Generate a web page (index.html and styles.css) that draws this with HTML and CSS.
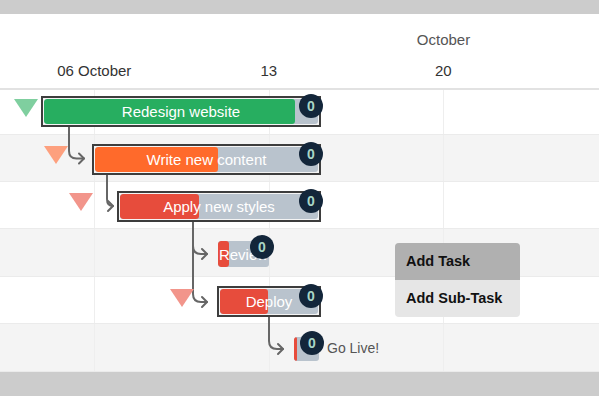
FILE: index.html
```html
<!DOCTYPE html>
<html lang="en">
<head>
    <meta charset="UTF-8">
    <title>Gantt</title>
    <link rel="stylesheet" href="styles.css">
</head>
<body>
    <div class="topbar"></div>

    <!-- Timescale -->
    <header class="scale">
        <div class="months"><span class="month">October</span></div>
        <div class="weeks">
            <span>06 October</span>
            <span>13</span>
            <span>20</span>
        </div>
    </header>

    <main class="chart">
        <div class="row first"></div>
        <div class="row"></div>
        <div class="row"></div>
        <div class="row tall"></div>
        <div class="row"></div>
        <div class="row tall"></div>

        <!-- dependency links -->
        <svg class="links" width="599" height="282" viewBox="0 0 599 282">
            <g fill="none" stroke="#666" stroke-width="2" stroke-linecap="round" stroke-linejoin="round">
                <path d="M69 36 V61 Q69 68.5 76.5 68.5 H84"/>
                <path d="M79 63.5 L84 68.5 L79 73.5"/>
                <path d="M107 84 V109 Q107 116 113 116"/>
                <path d="M108 111 L113 116 L108 121"/>
                <path d="M193 131 V204 Q193 212 201 212 H207"/>
                <path d="M193 156 Q193 164 201 164 H207"/>
                <path d="M202 159 L207 164 L202 169"/>
                <path d="M202 207 L207 212 L202 217"/>
                <path d="M269 227 V251 Q269 259 277 259 H283"/>
                <path d="M278 254 L283 259 L278 264"/>
            </g>
        </svg>

        <span class="toggle green" style="left:14px;top:9px"></span>
        <span class="toggle orange" style="left:44px;top:56px"></span>
        <span class="toggle red" style="left:69px;top:103px"></span>
        <span class="toggle red" style="left:170px;top:199px"></span>

        <div class="bar parent" style="left:41px;top:6px;width:280px">
            <div class="track"><div class="progress green" style="width:251px"></div><span class="label">Redesign website</span></div>
            <span class="badge">0</span>
        </div>
        <div class="bar parent" style="left:92px;top:54px;width:229px">
            <div class="track"><div class="progress orange" style="width:123px"></div><span class="label">Write new content</span></div>
            <span class="badge">0</span>
        </div>
        <div class="bar parent" style="left:117px;top:101px;width:204px">
            <div class="track"><div class="progress red" style="width:79px"></div><span class="label">Apply new styles</span></div>
            <span class="badge">0</span>
        </div>
        <div class="bar" style="left:218px;top:151px;width:51px">
            <div class="track"><div class="progress red" style="width:11px"></div><span class="label">Review</span></div>
            <span class="badge">0</span>
        </div>
        <div class="bar parent" style="left:217px;top:196px;width:104px">
            <div class="track"><div class="progress red" style="width:48px"></div><span class="label">Deploy</span></div>
            <span class="badge">0</span>
        </div>
        <div class="bar small" style="left:294px;top:247px;width:25px">
            <div class="track"><div class="progress red" style="width:3px"></div></div>
            <span class="badge">0</span>
            <span class="outside">Go Live!</span>
        </div>

        <!-- context menu -->
        <ul class="menu">
            <li class="active">Add Task</li>
            <li>Add Sub-Task</li>
        </ul>
    </main>

    <div class="bottombar"></div>
</body>
</html>
```

FILE: styles.css
```css
body {
    margin: 0;
    padding: 0;
    width: 599px;
    height: 396px;
    overflow: hidden;
    font-family: "Liberation Sans", Arial, sans-serif;
    background-color: #fff;
}

.topbar {
    height: 14px;
    background-color: #cccccc;
}

.bottombar {
    height: 24px;
    background-color: #cccccc;
}

/* timescale header */
.scale {
    height: 74px;
    border-bottom: 2px solid #e2e2e2;
    font-size: 15px;
}

.months {
    display: flex;
    padding-left: 356px;
    padding-top: 17px;
    height: 31px;
}

.month {
    width: 175px;
    text-align: center;
    color: #555;
}

.weeks {
    display: flex;
    padding-left: 7px;
}

.weeks span {
    width: 174.5px;
    text-align: center;
    color: #333;
}

/* rows */
.chart {
    position: relative;
    height: 282px;
}

.row {
    height: 47px;
    box-sizing: border-box;
    border-bottom: 1px solid #ebebeb;
    background-color: #fff;
    background-image:
        linear-gradient(#eeeeee, #eeeeee),
        linear-gradient(#eeeeee, #eeeeee),
        linear-gradient(#eeeeee, #eeeeee);
    background-size: 1px 100%;
    background-repeat: no-repeat;
    background-position: 94px 0, 269px 0, 443px 0;
}

.row.first { height: 45px; }
.row.tall { height: 48px; }

.row:nth-child(even) {
    background-color: #f4f4f4;
}

.links {
    position: absolute;
    left: 0;
    top: 0;
}

/* collapse toggles */
.toggle {
    position: absolute;
    width: 0;
    height: 0;
    border-left: 12px solid transparent;
    border-right: 12px solid transparent;
    border-top: 18px solid #7fcf9f;
}

.toggle.orange { border-top-color: #fda07e; }
.toggle.red { border-top-color: #f2958b; }

/* task bars */
.bar {
    position: absolute;
    height: 26px;
    box-sizing: border-box;
}

.bar.parent {
    height: 31px;
    border: 2px solid #3d3d3d;
    padding: 1px;
    background-color: #f4f4f4;
}

.bar.small {
    height: 24px;
}

.track {
    position: relative;
    height: 100%;
    background-color: #b9c3cd;
    border-radius: 3px;
    overflow: hidden;
}

.progress {
    height: 100%;
    border-radius: 3px;
}

.progress.green { background-color: #27ae60; }
.progress.orange { background-color: #ff6a2b; }
.progress.red { background-color: #e74c3c; }

.label {
    position: absolute;
    left: 0;
    right: 0;
    top: 0;
    bottom: 0;
    display: flex;
    align-items: center;
    justify-content: center;
    color: #fff;
    font-size: 15px;
    white-space: nowrap;
}

.badge {
    position: absolute;
    right: -4px;
    top: -4px;
    width: 24px;
    height: 24px;
    border-radius: 50%;
    background-color: #13263a;
    color: #a9d6c6;
    font-size: 14px;
    font-weight: bold;
    display: flex;
    align-items: center;
    justify-content: center;
}

.bar:not(.parent) .badge {
    right: -5px;
    top: -6px;
}

.outside {
    position: absolute;
    left: 33px;
    top: 3px;
    color: #555;
    font-size: 14px;
    white-space: nowrap;
}

/* context menu */
.menu {
    position: absolute;
    left: 395px;
    top: 153px;
    width: 125px;
    margin: 0;
    padding: 0;
    list-style: none;
    border-radius: 4px;
    overflow: hidden;
    background-color: #e6e6e6;
}

.menu li {
    height: 37px;
    line-height: 37px;
    padding-left: 11px;
    font-size: 14.5px;
    font-weight: bold;
    color: #111;
}

.menu li.active {
    background-color: #b0b0b0;
}
```
